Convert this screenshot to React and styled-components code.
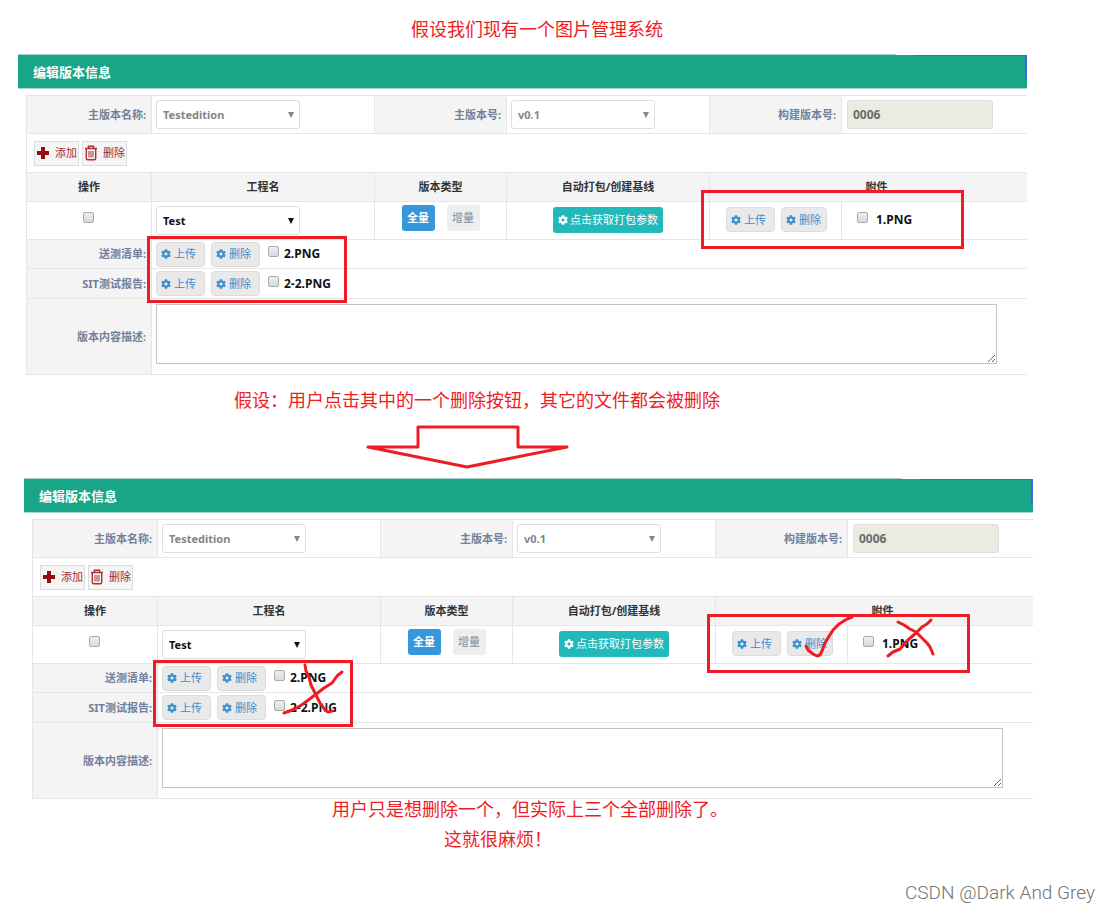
import React, { useId } from "react";
import styled, { createGlobalStyle } from "styled-components";
import { FaCog } from "react-icons/fa";

const GlobalStyle = createGlobalStyle`
  *, *::before, *::after { box-sizing: border-box; }
  body {
    margin: 0;
    background: #fff;
    font-family: "Noto Sans", "Noto Sans CJK SC", sans-serif;
    font-size: 11px;
    line-height: 16px;
    color: #222;
  }
  button, input, select, textarea { font: inherit; margin: 0; }
`;

const RED = "#ee1c24";

const Page = styled.main`
  display: flex;
  flex-direction: column;
  padding-top: 16px;
`;

const Caption = styled.p`
  margin: 0;
  padding-left: ${(p) => p.$indent}px;
  font-family: "Noto Sans CJK SC", sans-serif;
  font-size: 18px;
  line-height: 24px;
  color: ${RED};
`;

const Notes = styled.div`
  display: flex;
  flex-direction: column;
  gap: 6px;
  margin-top: -3px;
`;

const ArrowRow = styled.div`
  display: flex;
  padding: 14px 0 9px 366px;
`;

const PanelBox = styled.section`
  position: relative;
  margin: ${(p) => (p.$shifted ? "0 78px 0 24px" : "14px 84px 12px 18px")};
`;

const TitleBar = styled.header`
  display: flex;
  align-items: center;
  height: 35px;
  padding: 1px 15px 0;
  background: #19a688;
  border-top: 1px solid #a9cfc8;
  border-bottom: 1px solid #a5dccf;
`;

const Title = styled.h2`
  margin: 0;
  font-size: 13px;
  line-height: 20px;
  font-weight: 700;
  color: #fff;
`;

const CornerEdge = styled.span`
  position: absolute;
  top: 0;
  right: 0;
  width: 131px;
  height: 25px;
  border-top: 1px solid #fff;

  &::after {
    content: "";
    position: absolute;
    top: 0;
    right: 0;
    width: 113px;
    height: 24px;
    border-top: 1px solid #3f6ac4;
    border-right: 2px solid #4560e0;
  }
`;

const Grid = styled.table`
  width: calc(100% - 8px);
  margin: 6px 0 0 8px;
  table-layout: fixed;
  border-collapse: separate;
  border-spacing: 0;
  border-top: 1px solid #e6e6e6;
  border-left: 1px solid #e6e6e6;
`;

const Col = styled.col`
  width: ${(p) => p.$w}px;
`;

const Row = styled.tr`
  height: ${(p) => p.$h}px;
`;

const Cell = styled.td`
  padding: ${(p) => p.$pad || "0 4px"};
  text-align: ${(p) => p.$align || "left"};
  vertical-align: middle;
  border-bottom: 1px solid #e6e6e6;
  border-right: ${(p) => (p.$last ? "0" : "1px solid #e6e6e6")};
`;

const LabelCell = styled(Cell).attrs({ as: "th", scope: "row" })`
  padding: 0 5px 0 4px;
  text-align: right;
  font-weight: 700;
  color: #71809c;
  background: #f4f4f4;
`;

const HeadCell = styled(Cell).attrs({ as: "th", scope: "col" })`
  text-align: center;
  font-weight: 700;
  color: #333;
  background: #f4f4f4;
`;

const Line = styled.div`
  display: flex;
  align-items: center;
  justify-content: ${(p) => p.$justify || "flex-start"};
  gap: ${(p) => p.$gap || 0}px;
`;

const SelectWrap = styled.div`
  position: relative;
  width: 144px;
  color: ${(p) => (p.$muted ? "#858585" : "#111")};
`;

const Select = styled.select`
  display: block;
  width: 100%;
  height: 29px;
  padding: 0 6px;
  appearance: none;
  font-weight: 700;
  color: inherit;
  background: #fff;
  border: 1px solid #dedede;
  border-radius: 3px;
`;

const SelectArrow = styled.svg`
  position: absolute;
  top: 12px;
  right: 6px;
  pointer-events: none;
`;

const BuildInput = styled.input`
  display: block;
  width: 146px;
  height: 29px;
  padding: 0 5px;
  font-size: 12px;
  font-weight: 700;
  color: #6a6a6a;
  background: #ebebe2;
  border: 1px solid #dededa;
  border-radius: 3px;
`;

const ToolButton = styled.button`
  display: flex;
  align-items: center;
  justify-content: space-between;
  width: 45px;
  height: 25px;
  padding: 0 1px;
  white-space: nowrap;
  color: #a02c35;
  background: #f5f5f5;
  border: 1px solid #dcdcdc;
`;

const FileButton = styled.button`
  display: flex;
  align-items: center;
  gap: 3px;
  width: ${(p) => (p.$narrow ? 46 : 49)}px;
  height: 25px;
  padding: 0 0 0 4px;
  white-space: nowrap;
  color: #3a8fcf;
  background: #e9e9e9;
  border: 1px solid #dcdcdc;
  border-radius: 4px;
`;

const TypeButton = styled.button`
  width: 33px;
  height: 26px;
  padding: 0;
  white-space: nowrap;
  font-weight: ${(p) => (p.$active ? 700 : 400)};
  color: ${(p) => (p.$active ? "#fff" : "#7c89a0")};
  background: ${(p) => (p.$active ? "#3598dc" : "#eeeeee")};
  border: 0;
  border-radius: 3px;
`;

const ParamButton = styled.button`
  display: flex;
  align-items: center;
  gap: 2px;
  height: 26px;
  padding: 0 5px;
  white-space: nowrap;
  color: #fff;
  background: #22b9bb;
  border: 0;
  border-radius: 3px;
`;

const Check = styled.input.attrs({ type: "checkbox" })`
  display: block;
  flex: none;
  width: 11px;
  height: 11px;
  appearance: none;
  background: linear-gradient(#eeeeee, #d9d9d9);
  border: 1px solid #aaa;
  border-radius: 2px;
`;

const FileLabel = styled.label`
  display: flex;
  align-items: flex-start;
  gap: ${(p) => p.$gap}px;
  font-size: 12px;
  font-weight: 700;
  color: #111;
`;

const Description = styled.textarea`
  display: block;
  width: 100%;
  height: 60px;
  resize: vertical;
  background: #fff;
  border: 1px solid #c4c4c4;
`;

const MarkBox = styled.span`
  position: absolute;
  top: ${(p) => p.$top}px;
  left: ${(p) => p.$left}px;
  width: ${(p) => p.$w}px;
  height: ${(p) => p.$h}px;
  border: 3px solid ${RED};
  pointer-events: none;
`;

const Scribbles = styled.svg`
  position: absolute;
  top: 0;
  left: 0;
  pointer-events: none;
`;

const Watermark = styled.footer`
  margin-top: 31px;
  padding-right: 16px;
  text-align: right;
  font-family: Roboto, sans-serif;
  font-size: 19px;
  font-weight: 300;
  line-height: 24px;
  color: #747474;
`;

function PlusIcon() {
  return (
    <svg width="14" height="14" viewBox="0 0 14 14" aria-hidden="true">
      <path d="M5 1h4v4h4v4H9v4H5V9H1V5h4z" fill="#970b14" />
    </svg>
  );
}

function TrashIcon() {
  return (
    <svg width="14" height="16" viewBox="0 0 14 16" fill="none" stroke="#ab3038" aria-hidden="true">
      <path d="M1 3.500h12M4.500 3V1.300h5V3" strokeWidth="1.600" />
      <path d="M2.300 4v9.200q0 1.500 1.500 1.500h6.400q1.500 0 1.500-1.500V4" strokeWidth="1.400" />
      <path d="M5 6v6.500M7 6v6.500M9 6v6.500" strokeWidth="1" />
    </svg>
  );
}

function Dropdown({ label, id, value, muted }) {
  return (
    <SelectWrap $muted={muted}>
      <Select id={id} aria-label={label} defaultValue={value}>
        <option>{value}</option>
      </Select>
      <SelectArrow width="6" height="6" viewBox="0 0 6 6" aria-hidden="true">
        <path d="M0 0h6L3 6z" fill="currentColor" />
      </SelectArrow>
    </SelectWrap>
  );
}

function FileButtons({ narrow }) {
  return (
    <Line $gap={6}>
      <FileButton type="button">
        <FaCog size={10} />
        上传
      </FileButton>
      <FileButton type="button" $narrow={narrow}>
        <FaCog size={10} />
        删除
      </FileButton>
    </Line>
  );
}

function FileCheck({ file, gap }) {
  return (
    <FileLabel $gap={gap}>
      <Check />
      {file}
    </FileLabel>
  );
}

function FileRow({ title, file, height }) {
  return (
    <Row $h={height}>
      <LabelCell>{title}</LabelCell>
      <Cell colSpan={5} $last>
        <Line $gap={8}>
          <FileButtons />
          <FileCheck file={file} gap={5} />
        </Line>
      </Cell>
    </Row>
  );
}

function VersionPanel({ shifted, children }) {
  const id = useId();
  return (
    <PanelBox $shifted={shifted}>
      <TitleBar>
        <Title>编辑版本信息</Title>
      </TitleBar>
      <CornerEdge />
      <Grid>
        <colgroup>
          <Col $w={125} />
          <Col $w={223} />
          <Col $w={132} />
          <Col $w={203} />
          <Col $w={132} />
          <col />
        </colgroup>
        <tbody>
          <Row $h={38}>
            <LabelCell><label htmlFor={`${id}-name`}>主版本名称:</label></LabelCell>
            <Cell><Dropdown id={`${id}-name`} value="Testedition" muted /></Cell>
            <LabelCell><label htmlFor={`${id}-major`}>主版本号:</label></LabelCell>
            <Cell><Dropdown id={`${id}-major`} value="v0.1" muted /></Cell>
            <LabelCell><label htmlFor={`${id}-build`}>构建版本号:</label></LabelCell>
            <Cell $last $pad="0 5px"><BuildInput id={`${id}-build`} defaultValue="0006" readOnly /></Cell>
          </Row>
          <Row $h={39}>
            <Cell colSpan={6} $last $pad="0 7px">
              <Line $gap={3}>
                <ToolButton type="button">
                  <PlusIcon />
                  添加
                </ToolButton>
                <ToolButton type="button">
                  <TrashIcon />
                  删除
                </ToolButton>
              </Line>
            </Cell>
          </Row>
          <Row $h={29}>
            <HeadCell>操作</HeadCell>
            <HeadCell>工程名</HeadCell>
            <HeadCell>版本类型</HeadCell>
            <HeadCell>自动打包/创建基线</HeadCell>
            <HeadCell colSpan={2} $last $pad="0 4px 0 20px">附件</HeadCell>
          </Row>
          <Row $h={38}>
            <Cell $pad="0 6px 6px 4px"><Line $justify="center"><Check aria-label="操作" /></Line></Cell>
            <Cell><Dropdown label="工程名" value="Test" /></Cell>
            <Cell $pad="0 4px 6px">
              <Line $justify="center" $gap={12}>
                <TypeButton type="button" $active>全量</TypeButton>
                <TypeButton type="button">增量</TypeButton>
              </Line>
            </Cell>
            <Cell $pad="0 4px 2px">
              <Line $justify="center">
                <ParamButton type="button">
                  <FaCog size={10} />
                  点击获取打包参数
                </ParamButton>
              </Line>
            </Cell>
            <Cell $pad="0 0 2px 16px"><FileButtons narrow /></Cell>
            <Cell $last $pad="0 15px 2px"><FileCheck file="1.PNG" gap={8} /></Cell>
          </Row>
          <FileRow title="送测清单:" file="2.PNG" height={29} />
          <FileRow title="SIT测试报告:" file="2-2.PNG" height={30} />
          <Row $h={76}>
            <LabelCell><label htmlFor={`${id}-desc`}>版本内容描述:</label></LabelCell>
            <Cell colSpan={5} $last $pad="0 30px 6px 4px"><Description id={`${id}-desc`} /></Cell>
          </Row>
        </tbody>
      </Grid>
      <MarkBox $left={683} $top={136} $w={263} $h={59} />
      <MarkBox $left={129} $top={182} $w={200} $h={67} />
      {children}
    </PanelBox>
  );
}

function HandMarks() {
  return (
    <Scribbles
      width="960"
      height="260"
      fill="none"
      stroke={RED}
      strokeWidth="3"
      strokeLinecap="round"
      strokeLinejoin="round"
      aria-hidden="true"
    >
      <path d="M281 187L282 193L285 199L287 207L291 215L296 225L301 232L304 234L308 233" />
      <path d="M318 194L313 198L308 205L300 210L291 217L279 226L271 231L260 235" />
      <path d="M782 168L784 172L789 176L793 178L796 177L798 173L801 165L804 160L809 152L815 146L823 141L828 139" />
      <path d="M874 144L880 147L886 151L892 154L898 160L903 165L906 169L909 176" />
      <path d="M907 142L903 146L898 149L892 155L884 162L876 171L869 174L864 178" />
    </Scribbles>
  );
}

export default function App() {
  return (
    <>
      <GlobalStyle />
      <Page>
        <Caption $indent={411}>假设我们现有一个图片管理系统</Caption>
        <VersionPanel />
        <Caption $indent={234}>假设：用户点击其中的一个删除按钮，其它的文件都会被删除</Caption>
        <ArrowRow>
          <svg width="204" height="44" fill="none" stroke={RED} strokeWidth="3" aria-hidden="true">
            <path d="M52 2H152V22H201L101 42L2 22H52Z" strokeLinejoin="round" />
          </svg>
        </ArrowRow>
        <VersionPanel shifted>
          <HandMarks />
        </VersionPanel>
        <Notes>
          <Caption $indent={332}>用户只是想删除一个，但实际上三个全部删除了。</Caption>
          <Caption $indent={444}>这就很麻烦！</Caption>
        </Notes>
        <Watermark>CSDN @Dark And Grey</Watermark>
      </Page>
    </>
  );
}
